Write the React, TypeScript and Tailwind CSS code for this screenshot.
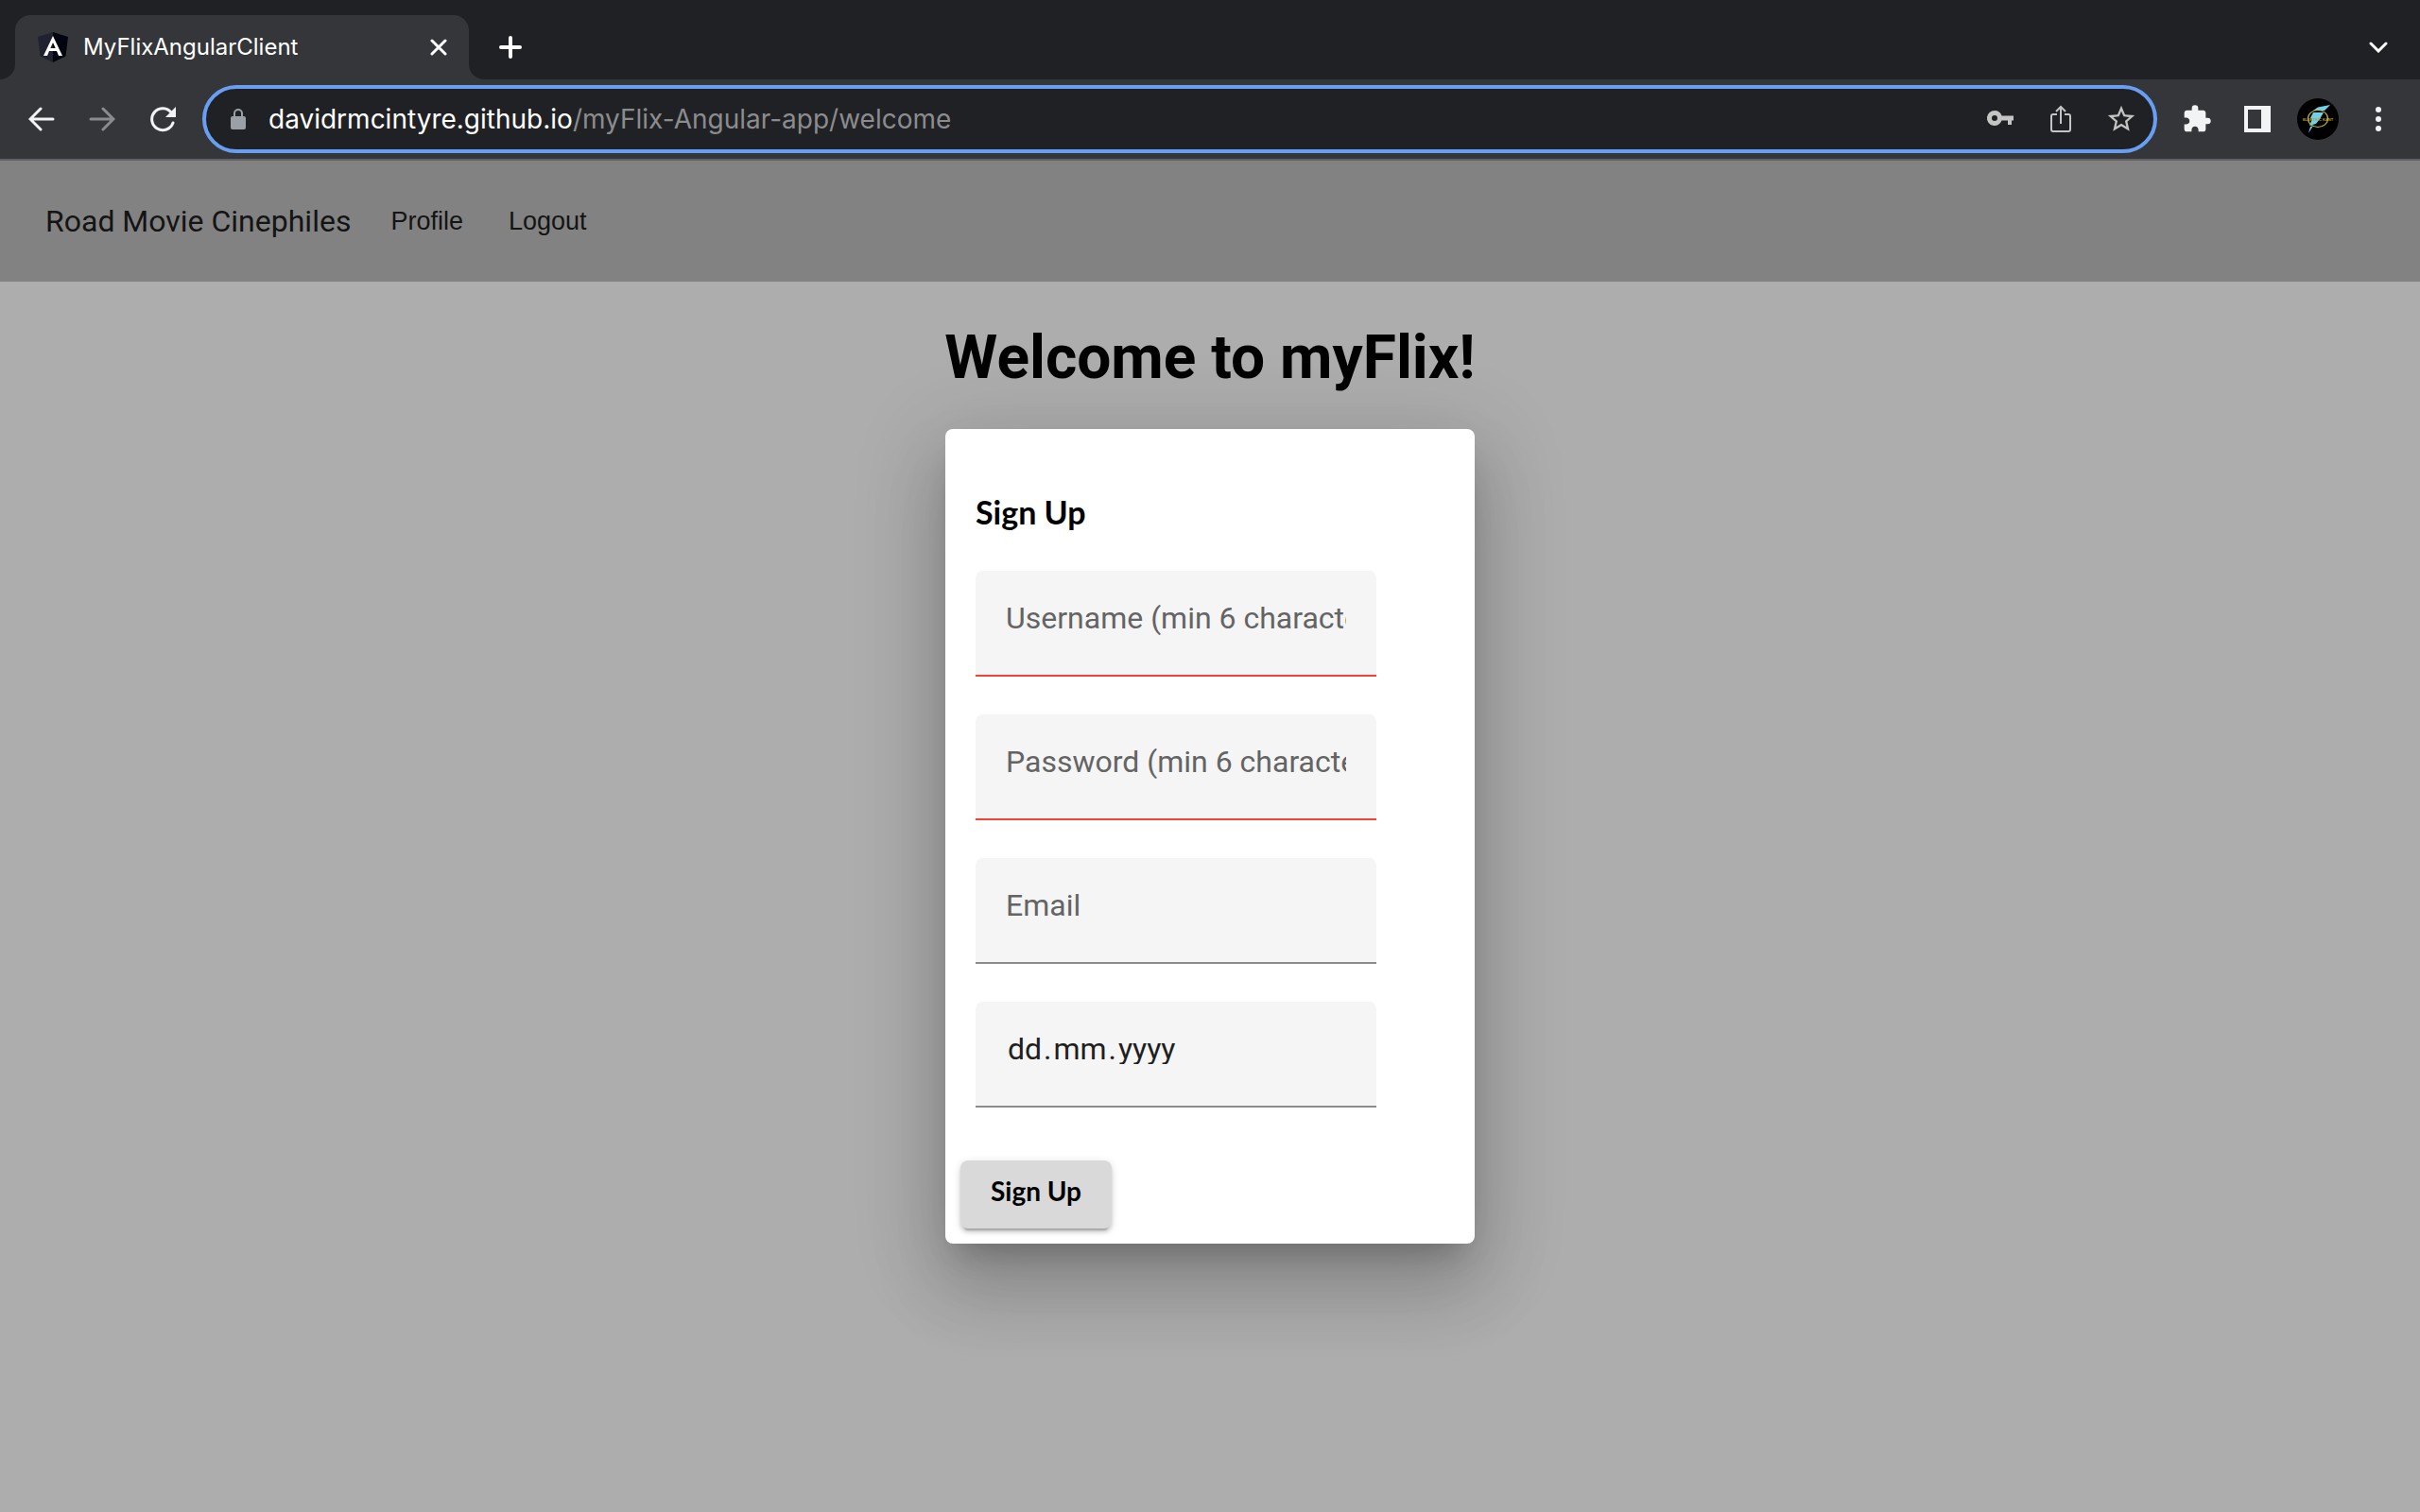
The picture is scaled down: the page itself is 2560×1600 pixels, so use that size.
import React from "react";

const iconButton = "flex h-12 w-16 shrink-0 items-center justify-center";

function AngularLogo() {
  return (
    <svg width="32" height="32" viewBox="0 0 32 32" aria-hidden="true">
      <path d="M16 0L0 5l2.500 20.500L16 32z" fill="#20232f" />
      <path d="M16 0l16 5-2.500 20.500L16 32z" fill="#02040f" />
      <path d="M16 4L6 25h4l2-5h8l2 5h4zm0 7L18.700 17h-5.400z" fill="#fff" fillRule="evenodd" />
    </svg>
  );
}

function Avatar() {
  return (
    <svg width="44" height="44" viewBox="0 0 44 44" aria-hidden="true">
      <circle cx="22" cy="22" r="22" fill="#000" />
      <path d="M35 7L22 9.500 17 13h12zM17 15h11l-4 7-4 5-7 2 3-7-2-1zM14 30l3-1-5 8z" fill="#6fd0ee" />
      <ellipse cx="22" cy="21.500" rx="10.500" ry="9" fill="none" stroke="#c9b32c" strokeWidth="1.200" />
      <text x="22" y="23.500" textAnchor="middle" fontSize="4" fontFamily="Liberation Sans" fontWeight="700" fill="#b8a42c">ELEKTRIC KANT</text>
    </svg>
  );
}

function BrowserChrome() {
  return (
    <header className="bg-[#202124] font-[Inter,sans-serif] text-white">
      <div className="flex h-[84px] items-end">
        <div className="flex h-[68px] w-4 items-end bg-[#35363a]">
          <div className="h-[68px] w-4 rounded-br-[16px] bg-[#202124]" />
        </div>
        <div className="flex h-[68px] w-[480px] items-center rounded-t-[16px] bg-[#35363a] pl-6 pr-4">
          <AngularLogo />
          <span className="ml-4 flex-1 text-2xl">MyFlixAngularClient</span>
          <button type="button" aria-label="Close tab" className="flex size-8 items-center justify-center">
            <svg width="18" height="18" viewBox="0 0 18 18" stroke="#fff" strokeWidth="3" strokeLinecap="round">
              <path d="M2 2l14 14M16 2L2 16" />
            </svg>
          </button>
        </div>
        <div className="h-[68px] w-4 bg-[#35363a]">
          <div className="h-[68px] w-4 rounded-bl-[16px] bg-[#202124]" />
        </div>
        <button type="button" aria-label="New tab" className="ml-2 flex h-[68px] w-10 items-center justify-center">
          <svg width="24" height="24" viewBox="0 0 24 24" stroke="#fff" strokeWidth="4" strokeLinecap="round">
            <path d="M12 2v20M2 12h20" />
          </svg>
        </button>
        <button type="button" aria-label="Search tabs" className="ml-auto mr-3 flex h-[68px] w-16 items-center justify-center">
          <svg width="20" height="12" viewBox="0 0 20 12" fill="none" stroke="#fff" strokeWidth="3" strokeLinecap="round">
            <path d="M2 2l8 8 8-8" />
          </svg>
        </button>
      </div>

      <div className="flex h-[86px] items-center border-b-2 border-[#5f6063] bg-[#35363a] px-3">
        <button type="button" aria-label="Back" className={iconButton}>
          <svg width="28" height="28" viewBox="0 0 28 28" fill="none" stroke="#f1f3f4" strokeWidth="3" strokeLinecap="round">
            <path d="M26 14H3M13 3L2 14l11 11" />
          </svg>
        </button>
        <button type="button" aria-label="Forward" className={iconButton}>
          <svg width="28" height="28" viewBox="0 0 28 28" fill="none" stroke="#8a8b8d" strokeWidth="3" strokeLinecap="round">
            <path d="M2 14h23M15 3l11 11-11 11" />
          </svg>
        </button>
        <button type="button" aria-label="Reload" className={iconButton}>
          <svg width="28" height="28" viewBox="0 0 28 28">
            <path d="M23.500 7.500A11.500 11.500 0 1 0 25 18" fill="none" stroke="#f1f3f4" strokeWidth="3" strokeLinecap="round" />
            <path d="M28 1v11H17z" fill="#f1f3f4" />
          </svg>
        </button>
        <div className="mx-[10px] flex h-[72px] min-w-0 flex-1 items-center rounded-full border-4 border-[#699ff3] bg-[#202124] pl-6 pr-[2px]">
          <svg width="20" height="24" viewBox="0 0 20 24" aria-hidden="true">
            <rect x="2" y="9" width="16" height="14" rx="2" fill="#9aa0a6" />
            <path d="M6 10V6a4 4 0 0 1 8 0v4" fill="none" stroke="#9aa0a6" strokeWidth="2" />
          </svg>
          <div
            role="textbox"
            aria-label="Address"
            contentEditable
            suppressContentEditableWarning
            className="ml-[22px] flex-1 whitespace-nowrap text-[28px] leading-9 text-white outline-none"
          >
            davidrmcintyre.github.io<span className="text-[#8b8c8e]">/myFlix-Angular-app/welcome</span>
          </div>
          <button type="button" aria-label="Passwords" className={iconButton}>
            <svg width="32" height="32" viewBox="0 0 32 32" fill="#c4c4c4">
              <path fillRule="evenodd" d="M10 7a8 8 0 0 1 7.500 5.500H30v5h-2V22h-4v-4.500h-6.500A8 8 0 1 1 10 7zm0 5a3 3 0 1 0 0 6 3 3 0 0 0 0-6z" />
            </svg>
          </button>
          <button type="button" aria-label="Share" className={iconButton}>
            <svg width="24" height="32" viewBox="0 0 24 32" fill="none" stroke="#c4c4c4" strokeWidth="2">
              <path d="M8 11H4a2 2 0 0 0-2 2v14a2 2 0 0 0 2 2h16a2 2 0 0 0 2-2V13a2 2 0 0 0-2-2h-4M12 21V4M7 8l5-5 5 5" />
            </svg>
          </button>
          <button type="button" aria-label="Bookmark" className={iconButton}>
            <svg width="34" height="34" viewBox="0 0 24 24" fill="#c4c4c4">
              <path d="M22 9.240l-7.190-.620L12 2 9.190 8.630 2 9.240l5.460 4.730L5.820 21 12 17.270 18.180 21l-1.630-7.030L22 9.240zM12 15.400l-3.760 2.270 1-4.280-3.320-2.880 4.380-.380L12 6.100l1.710 4.040 4.380.380-3.320 2.880 1 4.280L12 15.400z" />
            </svg>
          </button>
        </div>
        <button type="button" aria-label="Extensions" className={iconButton}>
          <svg width="32" height="32" viewBox="0 0 24 24" fill="#f1f3f4">
            <path d="M20.500 11H19V7c0-1.100-.900-2-2-2h-4V3.500a2.500 2.500 0 0 0-5 0V5H4c-1.100 0-1.990.900-1.990 2v3.800H3.500c1.490 0 2.700 1.210 2.700 2.700s-1.210 2.700-2.700 2.700H2V20c0 1.100.900 2 2 2h3.800v-1.500c0-1.490 1.210-2.700 2.700-2.700s2.700 1.210 2.700 2.700V22H17c1.100 0 2-.900 2-2v-4h1.500a2.500 2.500 0 0 0 0-5z" />
          </svg>
        </button>
        <button type="button" aria-label="Side panel" className={iconButton}>
          <svg width="28" height="28" viewBox="0 0 28 28">
            <path fillRule="evenodd" d="M0 0h28v28H0zM4 4v20h14V4z" fill="#f1f3f4" />
          </svg>
        </button>
        <button type="button" aria-label="Profile menu" className={iconButton}>
          <Avatar />
        </button>
        <button type="button" aria-label="Browser menu" className={iconButton}>
          <svg width="8" height="28" viewBox="0 0 8 28" fill="#f1f3f4">
            <circle cx="4" cy="4" r="3" />
            <circle cx="4" cy="14" r="3" />
            <circle cx="4" cy="24" r="3" />
          </svg>
        </button>
      </div>
    </header>
  );
}

const fields = [
  { id: "username", type: "text", placeholder: "Username (min 6 characters)", invalid: true },
  { id: "password", type: "password", placeholder: "Password (min 6 characters)", invalid: true },
  { id: "email", type: "email", placeholder: "Email", invalid: false },
];

const datePart = "block h-9 text-[32px] leading-9 outline-none placeholder:text-[#1f1f1f]";

function BirthdayField() {
  return (
    <div className="h-28 rounded-t-lg border-b-2 border-[#8c8c8c] bg-[#f5f5f5] px-8 pt-8">
      <div
        role="group"
        aria-label="Birthday"
        className="flex h-[34px] gap-[2px] overflow-hidden px-[2px] text-[32px] leading-9 text-[#1f1f1f]"
      >
        <input id="day" type="text" aria-label="Day" placeholder="dd" className={`${datePart} w-9`} />
        <span>.</span>
        <input id="month" type="text" aria-label="Month" placeholder="mm" className={`${datePart} w-14`} />
        <span>.</span>
        <input id="year" type="text" aria-label="Year" placeholder="yyyy" className={`${datePart} w-20`} />
      </div>
    </div>
  );
}

function SignUpCard() {
  return (
    <form className="flex w-[560px] flex-col rounded-lg bg-white p-4 pt-[68px] shadow-[0_22px_30px_-14px_rgba(0,0,0,0.2),0_48px_76px_6px_rgba(0,0,0,0.14),0_18px_92px_16px_rgba(0,0,0,0.12)]">
      <h2 className="px-4 font-[Lato,sans-serif] text-[34px] font-bold leading-10">Sign Up</h2>
      <div className="mt-[42px] flex flex-col gap-10 pl-4 pr-22">
        {fields.map((f) => (
          <div
            key={f.id}
            className={`h-28 rounded-t-lg border-b-2 bg-[#f5f5f5] px-8 pt-8 ${f.invalid ? "border-[#f44336]" : "border-[#8c8c8c]"}`}
          >
            <input
              id={f.id}
              type={f.type}
              aria-label={f.placeholder}
              placeholder={f.placeholder}
              className="block h-9 w-full text-[32px] leading-9 text-[#1f1f1f] outline-none placeholder:text-[#646464]"
            />
          </div>
        ))}
        <BirthdayField />
      </div>
      <button
        type="submit"
        className="mt-14 h-18 self-start rounded-lg bg-[#d9d9d9] px-8 pb-2 font-[Lato,sans-serif] text-[28px] font-bold text-black shadow-[0_6px_2px_-4px_rgba(0,0,0,0.2),0_4px_4px_0_rgba(0,0,0,0.14),0_2px_10px_0_rgba(0,0,0,0.12)]"
      >
        Sign Up
      </button>
    </form>
  );
}

export default function App() {
  return (
    <div className="flex min-h-screen flex-col bg-[#adadad] font-[Roboto,sans-serif] text-black">
      <BrowserChrome />
      <nav className="flex h-32 items-center bg-[#828282] px-12 text-[#141414]">
        <span className="text-[32px] leading-10">Road Movie Cinephiles</span>
        <a href="#profile" className="ml-[42px] font-['Liberation_Sans',sans-serif] text-[27px] leading-8">Profile</a>
        <a href="#logout" className="ml-12 font-['Liberation_Sans',sans-serif] text-[27px] leading-8">Logout</a>
      </nav>
      <main className="flex flex-1 flex-col items-center pb-16">
        <h1 className="pt-10 text-[64px] font-bold leading-[82px]">Welcome to myFlix!</h1>
        <div className="mt-[34px]">
          <SignUpCard />
        </div>
      </main>
    </div>
  );
}
